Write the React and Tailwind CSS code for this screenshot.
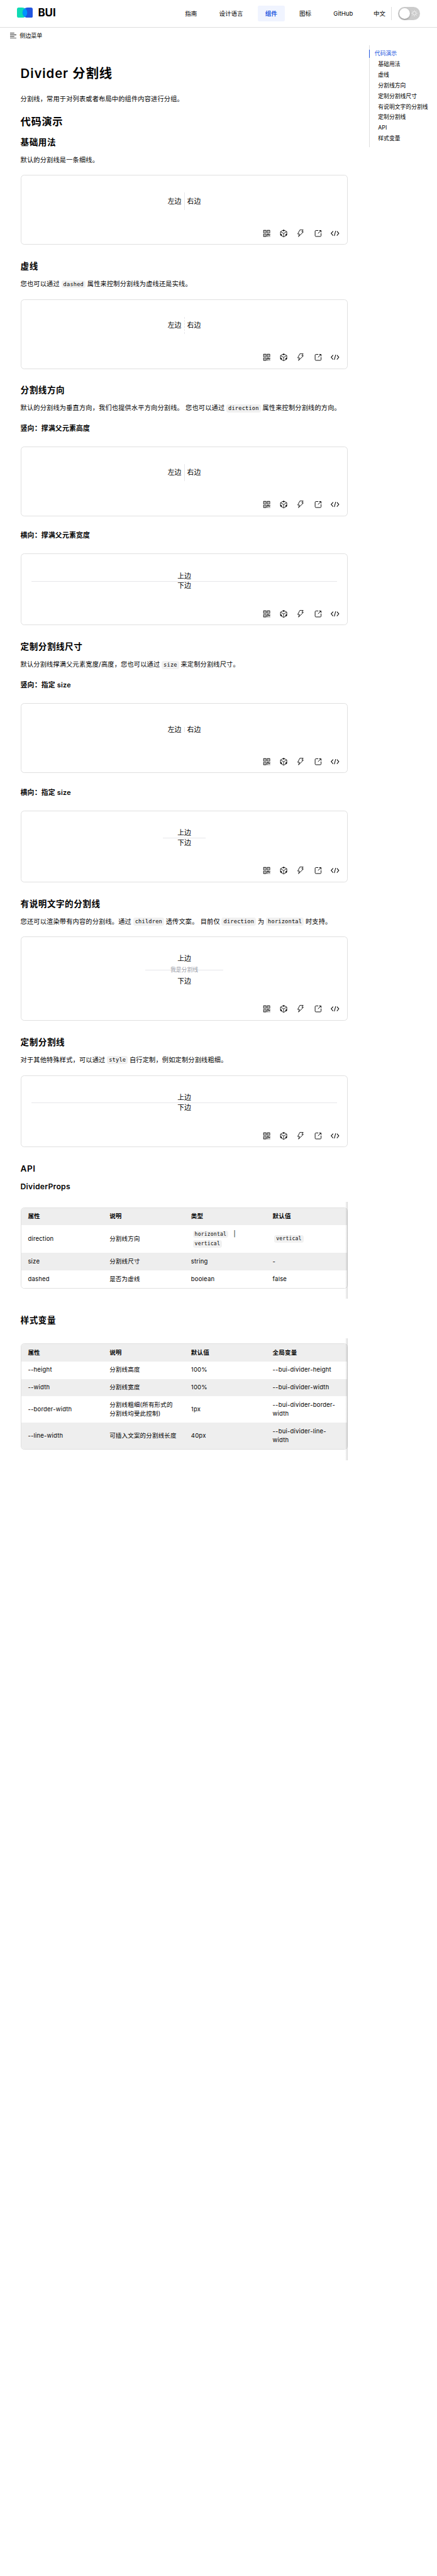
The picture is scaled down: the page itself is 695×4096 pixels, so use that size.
import React from "react";
import { AiOutlineQrcode } from "react-icons/ai";

function Logo() {
  return (
    <div className="flex items-center gap-[12px]">
      <svg className="h-[24px] w-[37px]" viewBox="0 0 37 24">
        <path d="M4 0H12A12 12 0 0 1 12 24H4A4 4 0 0 1 0 20V4A4 4 0 0 1 4 0Z" fill="#0fdbb4" />
        <path d="M33 0H25A12 12 0 0 0 25 24H33A4 4 0 0 0 37 20V4A4 4 0 0 0 33 0Z" fill="#2256e0" />
        <path d="M18.5 1.9A12 12 0 0 1 18.5 22.1A12 12 0 0 1 18.5 1.9Z" fill="#0095ff" />
      </svg>
      <span className="text-[25px] font-bold leading-[30px]">BUI</span>
    </div>
  );
}

function SandboxIcon() {
  return (
    <svg className="h-[18px] w-[18px]" viewBox="0 0 18 18" fill="none" stroke="#000" strokeWidth="1.2" strokeLinejoin="round">
      <path d="M9 0.9L16.4 5V13.1L9 17.3L1.6 13.1V5Z" />
      <path d="M1.6 5L9 9.1L16.4 5M9 9.1V17.3" />
      <path d="M9 0.9L12 2.6L9 4.2L6 2.6Z" fill="#000" stroke="none" />
      <path d="M1.6 9.6L4.8 11.4V14.9L1.6 13.1ZM16.4 9.6L13.2 11.4V14.9L16.4 13.1Z" fill="#000" stroke="none" />
    </svg>
  );
}

function BoltIcon() {
  return (
    <svg className="h-[18px] w-[18px]" viewBox="0 0 18 18" fill="none" stroke="#000" strokeWidth="1.3">
      <path d="M7.2 0.9H15L11.9 5.6H15.4L4 16.6L6.4 10.4H2.2Z" />
    </svg>
  );
}

function ExternalIcon() {
  return (
    <svg className="h-[18px] w-[18px]" viewBox="0 0 18 18" fill="none" stroke="#000" strokeWidth="1.4">
      <path d="M9 2.2H3.7A2 2 0 0 0 1.7 4.2V14.2A2 2 0 0 0 3.7 16.2H13.7A2 2 0 0 0 15.7 14.2V8.6" />
      <path d="M8.4 9.2L15 2.6M11.2 2.2H15.7V6.7" />
    </svg>
  );
}

function CodeIcon() {
  return (
    <svg className="h-[18px] w-[20px]" viewBox="0 0 20 18" fill="none" stroke="#000" strokeWidth="1.5">
      <path d="M5.6 3.8L1 9L5.6 14.2M14.4 3.8L19 9L14.4 14.2M11.5 3.2L8.5 14.8" />
    </svg>
  );
}

function Demo({ className, children }) {
  return (
    <div className={"flex shrink-0 flex-col justify-between rounded-[8px] border border-[#e0e0e0] pb-[15px] pt-[40px] text-[16px] leading-[22px] " + className}>
      <div className="flex flex-col items-center px-[24px]">{children}</div>
      <div className="flex items-center justify-end gap-[22px] pr-[20px]">
        <AiOutlineQrcode className="h-[21px] w-[21px] -mx-[1.5px]" />
        <SandboxIcon />
        <BoltIcon />
        <ExternalIcon />
        <div className="-mx-px flex">
          <CodeIcon />
        </div>
      </div>
    </div>
  );
}

function LeftRight({ line }) {
  return (
    <div className="flex h-[40px] items-center gap-[6px]">
      <span>左边</span>
      <div className={"w-0 border-l border-[#e6e6ea] " + line} />
      <span>右边</span>
    </div>
  );
}

function TopBottom({ children }) {
  return (
    <>
      <span>上边</span>
      {children}
      <span>下边</span>
    </>
  );
}

const H3 = ({ className, children }) => (
  <h3 className={"h-[28px] shrink-0 text-[20px] font-semibold leading-[28px] tracking-[0.04em] " + className}>{children}</h3>
);
const H4 = ({ className, children }) => (
  <h4 className={"h-[24px] shrink-0 text-[16px] font-semibold leading-[24px] tracking-[0.02em] " + className}>{children}</h4>
);
const P = ({ className, children }) => (
  <p className={"h-[24px] shrink-0 whitespace-nowrap text-[15px] leading-[24px] tracking-[0.3px] " + className}>{children}</p>
);
const Code = ({ children }) => (
  <code className="mx-[4px] rounded-[5px] bg-[#f1f1f1] px-[4.5px] py-[2px] font-['DejaVu_Sans_Mono','Noto_Sans_CJK_SC',monospace] text-[0.85em]">{children}</code>
);

function Table({ className, head, rows }) {
  return (
    <div className={"relative shrink-0 pb-[24px] pt-[12px] " + className}>
      <div className="overflow-hidden rounded-[8px] border border-[#e0e0e0] text-[14px] leading-[21px] tracking-[0.02em]">
        <div className="grid grid-cols-4 bg-[#eee] font-semibold">
          {head.map((h) => (
            <div key={h} className="px-[16px] py-[10px]">{h}</div>
          ))}
        </div>
        {rows.map((row, i) => (
          <div key={i} className={"grid grid-cols-4 items-center " + (i % 2 ? "bg-[#eee]" : "bg-white")}>
            {row.map((c, j) => (
              <div key={j} className="px-[16px] py-[10px]">{c}</div>
            ))}
          </div>
        ))}
      </div>
      <div className="absolute bottom-0 right-0 top-0 w-[6px] bg-linear-to-l from-black/15 to-transparent" />
    </div>
  );
}

const toc = ["基础用法", "虚线", "分割线方向", "定制分割线尺寸", "有说明文字的分割线", "定制分割线", "API", "样式变量"];

export default function App() {
  return (
    <div className="h-[6035px] w-[1024px] overflow-hidden bg-white font-['Inter','Noto_Sans_CJK_SC',sans-serif] text-black [zoom:0.6787]">
      <header className="flex h-[65px] items-center justify-between border-b border-[#dedede] pl-[40px] pr-[40px]">
        <div className="-mt-[4px]">
          <Logo />
        </div>
        <nav className="flex items-center text-[14px] leading-[38px]">
          <div className="flex gap-[16px]">
            <span className="px-[18px]">指南</span>
            <span className="px-[18px]">设计语言</span>
            <span className="rounded-[4px] bg-[#f0f4ff] px-[18px] font-semibold text-[#2256e0]">组件</span>
            <span className="px-[18px]">图标</span>
            <span className="px-[18px]">GitHub</span>
          </div>
          <span className="ml-[30px]">中文</span>
          <div className="ml-[14px] h-[30px] w-px bg-[#dedede]" />
          <div className="ml-[15px] flex h-[30px] w-[51px] items-center justify-between rounded-full bg-[#ccc] pl-[3px] pr-[6px]">
            <div className="h-[24px] w-[24px] rounded-full bg-white shadow-[0_2px_4px_rgba(0,0,0,0.3)]" />
            <svg className="h-[15px] w-[15px]" viewBox="0 0 15 15" fill="none" stroke="#fff" strokeWidth="1.1">
              <circle cx="7.5" cy="7.5" r="4.2" />
              <path d="M7.5 0V1.7M7.5 13.3V15M0 7.5H1.7M13.3 7.5H15M2.2 2.2L3.3 3.3M11.7 11.7L12.8 12.8M2.2 12.8L3.3 11.7M11.7 3.3L12.8 2.2" />
            </svg>
          </div>
        </nav>
      </header>

      <div className="flex h-[37px] items-center gap-[7px] pl-[24px] text-[13.33px]">
        <svg className="h-[14px] w-[15px]" viewBox="0 0 15 14" stroke="#000" strokeWidth="1.3">
          <path d="M0 1H10M0 5H15M0 9H10M0 13H15" />
        </svg>
        <span>侧边菜单</span>
      </div>

      <div className="flex items-start">
        <main className="ml-[48px] mt-[49px] flex w-[767.5px] flex-col">
          <h1 className="h-[44px] text-[30px] font-semibold leading-[44px] tracking-[0.045em]">Divider 分割线</h1>
          <P className="mt-[25px]">分割线，常用于对列表或者布局中的组件内容进行分组。</P>
          <h2 className="mt-[23px] h-[36px] text-[24px] font-semibold leading-[36px] tracking-[0.04em]">代码演示</h2>
          <H3 className="mt-[17px]">基础用法</H3>
          <P className="mt-[14.7px]">默认的分割线是一条细线。</P>
          <Demo className="mt-[23.5px] h-[163.2px]">
            <LeftRight line="h-[40px]" />
          </Demo>

          <H3 className="mt-[36.6px]">虚线</H3>
          <P className="mt-[14.7px]">您也可以通过<Code>dashed</Code>属性来控制分割线为虚线还是实线。</P>
          <Demo className="mt-[24.6px] h-[163.2px]">
            <LeftRight line="h-[40px] border-dashed" />
          </Demo>

          <H3 className="mt-[36.6px]">分割线方向</H3>
          <P className="mt-[14.7px]">默认的分割线为垂直方向，我们也提供水平方向分割线。 您也可以通过<Code>direction</Code>属性来控制分割线的方向。</P>
          <H4 className="mt-[23.6px]">竖向：撑满父元素高度</H4>
          <Demo className="mt-[31px] h-[163.2px]">
            <LeftRight line="h-[40px]" />
          </Demo>
          <H4 className="mt-[33px]">横向：撑满父元素宽度</H4>
          <Demo className="mt-[31px] h-[168px]">
            <TopBottom>
              <div className="h-px w-full bg-[#e6e6ea]" />
            </TopBottom>
          </Demo>

          <H3 className="mt-[36.6px]">定制分割线尺寸</H3>
          <P className="mt-[14.7px]">默认分割线撑满父元素宽度/高度，您也可以通过<Code>size</Code>来定制分割线尺寸。</P>
          <H4 className="mt-[24.4px]">竖向：指定 size</H4>
          <Demo className="mt-[31px] h-[163.2px]">
            <LeftRight line="h-[12px]" />
          </Demo>
          <H4 className="mt-[33px]">横向：指定 size</H4>
          <Demo className="mt-[31px] h-[168px]">
            <TopBottom>
              <div className="h-px w-[100px] bg-[#e6e6ea]" />
            </TopBottom>
          </Demo>

          <H3 className="mt-[36.6px]">有说明文字的分割线</H3>
          <P className="mt-[14.7px]">您还可以渲染带有内容的分割线。通过<Code>children</Code>透传文案。 目前仅<Code>direction</Code>为<Code>horizontal</Code>时支持。</P>
          <Demo className="mt-[23.8px] h-[197px]">
            <TopBottom>
              <div className="flex h-[30px] items-center text-[13px] text-[#9a9da8]">
                <div className="h-px w-[59px] bg-[#e6e6ea]" />
                <span>我是分割线</span>
                <div className="h-px w-[59px] bg-[#e6e6ea]" />
              </div>
            </TopBottom>
          </Demo>

          <H3 className="mt-[36.6px]">定制分割线</H3>
          <P className="mt-[14.7px]">对于其他特殊样式，可以通过<Code>style</Code>自行定制，例如定制分割线粗细。</P>
          <Demo className="mt-[24.6px] h-[169px]">
            <TopBottom>
              <div className="h-[2px] w-full bg-[#e6e6ea]" />
            </TopBottom>
          </Demo>

          <H3 className="mt-[36.3px]">API</H3>
          <h4 className="mt-[14.2px] h-[28px] text-[18px] font-semibold leading-[28px] tracking-[0.02em]">DividerProps</h4>
          <Table
            className="mt-[22px]"
            head={["属性", "说明", "类型", "默认值"]}
            rows={[
              ["direction", "分割线方向", <><Code>horizontal</Code>&nbsp; |<br /><Code>vertical</Code></>, <Code>vertical</Code>],
              ["size", "分割线尺寸", "string", "-"],
              ["dashed", "是否为虚线", "boolean", "false"],
            ]}
          />

          <H3 className="mt-[36px]">样式变量</H3>
          <Table
            className="mt-[28px]"
            head={["属性", "说明", "默认值", "全局变量"]}
            rows={[
              ["--height", "分割线高度", "100%", "--bui-divider-height"],
              ["--width", "分割线宽度", "100%", "--bui-divider-width"],
              ["--border-width", <>分割线粗细(所有形式的<br />分割线均受此控制)</>, "1px", <>--bui-divider-border-<br />width</>],
              ["--line-width", "可插入文案的分割线长度", "40px", <>--bui-divider-line-<br />width</>],
            ]}
          />
        </main>

        <aside className="ml-[49px] mt-[4px] flex h-[239px] flex-col border-l border-[#dedede] pt-[7px] text-[13px] leading-[25px]">
          <div className="-ml-[1.47px] flex h-[25px] shrink-0 items-center">
            <div className="h-[19px] w-[1.47px] bg-[#2256e0]" />
            <span className="pl-[12px] text-[#2256e0]">代码演示</span>
          </div>
          {toc.map((t) => (
            <span key={t} className="shrink-0 whitespace-nowrap pl-[20px]">{t}</span>
          ))}
        </aside>
      </div>
    </div>
  );
}
